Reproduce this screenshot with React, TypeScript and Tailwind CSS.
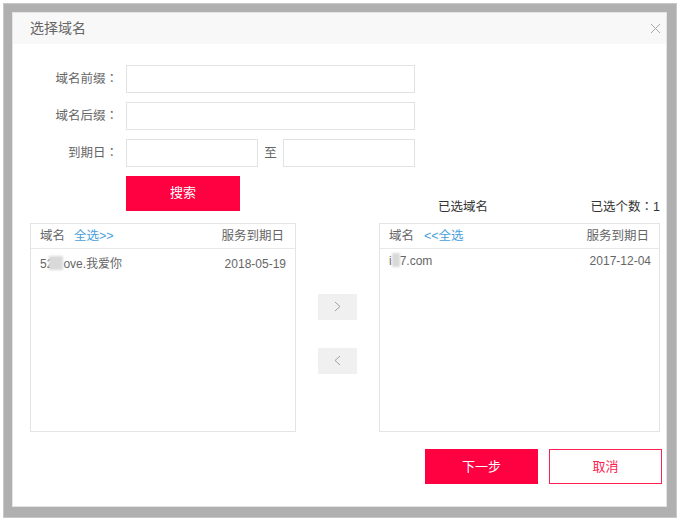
import React from "react";

function Colon() {
  return <span className="font-['Noto_Sans_CJK_TC',sans-serif]">：</span>;
}

function Field({ label, children }: { label: string; children: React.ReactNode }) {
  return (
    <div className="flex items-center h-[28px] mb-[9px]">
      <div className="w-[96px] pr-[8px] text-right text-[12.5px] leading-[26px] pb-[2px] text-[#666] whitespace-nowrap">
        {label}
        <Colon />
      </div>
      {children}
    </div>
  );
}

function Blur({ w }: { w: number }) {
  return <span className="inline-block h-[14px] align-[-2px] bg-[#d9d9d9] blur-[1px]" style={{ width: w }} />;
}

export default function App() {
  return (
    <div className="w-[680px] h-[521px] bg-white p-[3px] font-['Liberation_Sans','Noto_Sans_CJK_SC',sans-serif]">
      <div className="w-[674px] h-[515px] bg-[#b0b0b0] border border-[#c8c8c8] p-[8px]">
        <div className="w-[655px] h-[495px] bg-white border border-[#e4e4e4] flex flex-col">
          <div className="h-[31px] shrink-0 bg-[#f8f8f8] flex items-center justify-between pl-[17px] pr-[5px]">
            <span className="text-[14px] text-[#666]">选择域名</span>
            <svg width="11" height="11" viewBox="0 0 11 11">
              <path d="M1 1L10 10M10 1L1 10" stroke="#a8a8a8" strokeWidth="1" fill="none" />
            </svg>
          </div>
          <div className="pt-[21px] pl-[17px] flex flex-col">
            <Field label="域名前缀">
              <div className="w-[289px] h-[28px] border border-[#e2e2e2] bg-white" />
            </Field>
            <Field label="域名后缀">
              <div className="w-[289px] h-[28px] border border-[#e2e2e2] bg-white" />
            </Field>
            <Field label="到期日">
              <div className="w-[132px] h-[28px] border border-[#e2e2e2] bg-white" />
              <span className="w-[25px] text-center text-[12.5px] text-[#666]">至</span>
              <div className="w-[132px] h-[28px] border border-[#e2e2e2] bg-white" />
            </Field>
            <div className="flex items-end h-[39px]">
              <div className="ml-[96px] mb-[4px] pb-[1px] w-[114px] h-[35px] bg-[#ff0040] text-white text-[13px] flex items-center justify-center">搜索</div>
              <div className="ml-[139px] w-[281px] flex items-center justify-between h-[16px] text-[12.5px] text-[#333]">
                <span className="ml-[59px]">已选域名</span>
                <span>
                  已选个数
                  <Colon />1
                </span>
              </div>
            </div>
            <div className="flex mt-[8px] items-center">
              <div className="w-[266px] h-[209px] border border-[#e4e4e4] flex flex-col shrink-0">
                <div className="h-[25px] border-b border-[#e8e8e8] flex items-center pl-[9px] pr-[11px] text-[12.5px] text-[#666] shrink-0">
                  <span>域名</span>
                  <span className="ml-[9px] text-[#4a9fdc]">全选&gt;&gt;</span>
                  <span className="ml-auto">服务到期日</span>
                </div>
                <div className="flex items-center justify-between pl-[9px] pr-[9px] pt-[6px] text-[12px] text-[#666] leading-[18px]">
                  <span className="whitespace-nowrap">
                    5<span className="mr-[-4px]">2</span>
                    <Blur w={14} />
                    ove.我爱你
                  </span>
                  <span>2018-05-19</span>
                </div>
              </div>
              <div className="w-[83px] shrink-0 flex flex-col items-center gap-[28px] pt-[12px]">
                <div className="w-[39px] h-[26px] bg-[#f0f0f0] flex items-center justify-center">
                  <svg width="7" height="11" viewBox="0 0 7 11">
                    <path d="M1 1L6 5.5L1 10" stroke="#a0a0a0" fill="none" />
                  </svg>
                </div>
                <div className="w-[39px] h-[26px] bg-[#f0f0f0] flex items-center justify-center">
                  <svg width="7" height="11" viewBox="0 0 7 11">
                    <path d="M6 1L1 5.5L6 10" stroke="#a0a0a0" fill="none" />
                  </svg>
                </div>
              </div>
              <div className="w-[281px] h-[209px] border border-[#e4e4e4] flex flex-col shrink-0">
                <div className="h-[25px] border-b border-[#e8e8e8] flex items-center pl-[9px] pr-[10px] text-[12.5px] text-[#666] shrink-0">
                  <span>域名</span>
                  <span className="ml-[10px] text-[#4a9fdc]">&lt;&lt;全选</span>
                  <span className="ml-auto">服务到期日</span>
                </div>
                <div className="flex items-center justify-between pl-[9px] pr-[8px] pt-[3px] text-[12px] text-[#666] leading-[18px]">
                  <span className="whitespace-nowrap">
                    i<Blur w={8} />7.com
                  </span>
                  <span>2017-12-04</span>
                </div>
              </div>
            </div>
            <div className="flex mt-[17px] ml-[395px] gap-[11px]">
              <div className="w-[113px] shrink-0 h-[35px] bg-[#ff0040] text-white text-[13px] flex items-center justify-center">下一步</div>
              <div className="w-[113px] shrink-0 h-[35px] border-[1px] border-solid border-[#ff1f50] text-[#ff2050] text-[13px] flex items-center justify-center">取消</div>
            </div>
          </div>
        </div>
      </div>
    </div>
  );
}
